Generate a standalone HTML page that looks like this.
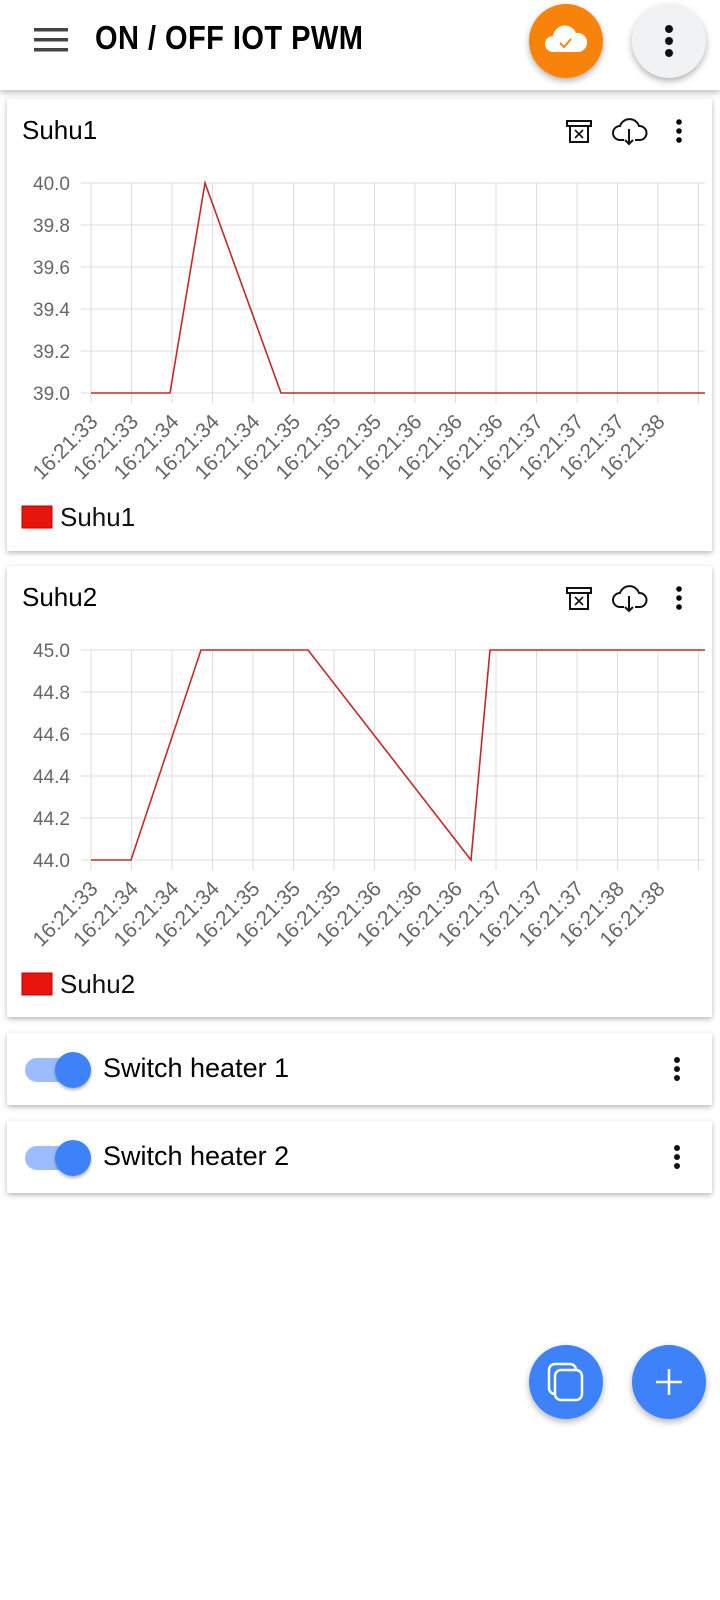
<!DOCTYPE html>
<html><head><meta charset="utf-8"><style>
*{margin:0;padding:0;box-sizing:border-box}
body{width:720px;height:1600px;background:#fff;font-family:"Liberation Sans",sans-serif;position:relative;overflow:hidden}
.hdr{position:absolute;left:0;top:0;width:720px;height:90px;background:#fff;box-shadow:0 3px 6px rgba(0,0,0,.25);z-index:2}
.title{position:absolute;left:95px;top:19px;font-size:33px;font-weight:bold;letter-spacing:.5px;transform:scaleX(.88);transform-origin:left}
.circ{position:absolute;width:74px;height:74px;border-radius:50%;box-shadow:0 3px 7px rgba(0,0,0,.3)}
.card{position:absolute;left:7px;width:705px;background:#fff;box-shadow:0 2px 5px rgba(0,0,0,.28)}
.ct{position:absolute;left:15px;top:16px;font-size:26px}
.sw{position:absolute;left:7px;width:705px;height:72px;background:#fff;box-shadow:0 2px 5px rgba(0,0,0,.28)}
.track{position:absolute;left:18px;top:25px;width:50px;height:24px;border-radius:12px;background:#9dbcff}
.knob{position:absolute;left:48px;top:19px;width:36px;height:36px;border-radius:50%;background:#3d82f8;box-shadow:0 2px 3px rgba(0,0,0,.3)}
.swt{position:absolute;left:96px;top:20px;font-size:27px}
</style></head><body>
<div class="hdr">
<svg style="position:absolute;left:34px;top:28px" width="34" height="24"><rect y="0" width="34" height="3.5" fill="#444"/><rect y="10" width="34" height="3.5" fill="#444"/><rect y="20" width="34" height="3.5" fill="#444"/></svg>
<div class="title">ON / OFF IOT PWM</div>
<div class="circ" style="left:529px;top:4px;background:#f7830a"><svg width="74" height="74" viewBox="0 0 74 74"><path d="M24 48 a8 8 0 0 1 0-16 a12 12 0 0 1 23-3 a9.5 9.5 0 0 1 3 19z" fill="#fff"/><path d="M31 39 l4 4 l7-8" stroke="#f7830a" stroke-width="2" fill="none"/></svg></div>
<div class="circ" style="left:632px;top:4px;background:#f1f2f4"><svg width="74" height="74"><circle cx="37" cy="25" r="4" fill="#111"/><circle cx="37" cy="37" r="4" fill="#111"/><circle cx="37" cy="49" r="4" fill="#111"/></svg></div>
</div>
<div class="card" style="top:99px;height:452px"><div class="ct">Suhu1</div><svg id="c1" width="705" height="452" style="position:absolute;left:0;top:0"></svg></div>
<div class="card" style="top:566px;height:451px"><div class="ct">Suhu2</div><svg id="c2" width="705" height="451" style="position:absolute;left:0;top:0"></svg></div>
<div class="sw" style="top:1033px"><div class="track"></div><div class="knob"></div><div class="swt">Switch heater 1</div><svg style="position:absolute;left:660px;top:22px" width="20" height="30"><circle cx="10" cy="5" r="3" fill="#111"/><circle cx="10" cy="14" r="3" fill="#111"/><circle cx="10" cy="23" r="3" fill="#111"/></svg></div>
<div class="sw" style="top:1121px"><div class="track"></div><div class="knob"></div><div class="swt">Switch heater 2</div><svg style="position:absolute;left:660px;top:22px" width="20" height="30"><circle cx="10" cy="5" r="3" fill="#111"/><circle cx="10" cy="14" r="3" fill="#111"/><circle cx="10" cy="23" r="3" fill="#111"/></svg></div>
<div class="circ" style="left:529px;top:1345px;background:#3d82f8"><svg width="74" height="74"><rect x="20" y="19" width="27" height="30" rx="6" fill="none" stroke="#fff" stroke-width="2.5"/><rect x="26" y="25" width="27" height="30" rx="6" fill="#3d82f8" stroke="#fff" stroke-width="2.5"/></svg></div>
<div class="circ" style="left:632px;top:1345px;background:#3d82f8"><svg width="74" height="74"><path d="M37 24v26M24 37h26" stroke="#fff" stroke-width="2.5"/></svg></div>
<script>
function chart(id,top,bot,labs,ticks,pts,name){
 var s='',x0=84,dx=40.5,N=16;
 s+='<g stroke="#111" stroke-width="2" fill="none"><rect x="560" y="22" width="24" height="5"/><path d="M563 27v16h18v-16"/><path d="M568 31l8 8M576 31l-8 8" stroke-width="1.6"/>';
 s+='<path d="M617 41h-4a7 7 0 0 1 0-14a10 10 0 0 1 19 0a7 7 0 0 1 1 14h-5"/><path d="M622 30v15M618 41l4 4l4-4"/></g>';
 s+='<circle cx="672" cy="23" r="2.8"/><circle cx="672" cy="32" r="2.8"/><circle cx="672" cy="41" r="2.8"/>';
 var step=(bot-top)/5;
 for(var i=0;i<6;i++){var y=top+i*step;s+='<line x1="74" x2="698" y1="'+y+'" y2="'+y+'" stroke="#ddd"/>';
  s+='<text x="63" y="'+(y+7)+'" text-anchor="end" font-size="19" fill="#666">'+labs[i]+'</text>';}
 for(var j=0;j<N;j++){var x=x0+j*dx;s+='<line x1="'+x+'" x2="'+x+'" y1="'+top+'" y2="'+(bot+10)+'" stroke="#ddd"/>';}
 for(var j=0;j<15;j++){var x=x0+j*dx+8;s+='<text transform="translate('+x+','+(bot+30)+') rotate(-45)" text-anchor="end" font-size="21" fill="#666">'+ticks[j]+'</text>';}
 var p=pts.map(function(q){return q[0]+','+(top+(1-q[1])*(bot-top))}).join(' ');
 s+='<polyline points="'+p+'" fill="none" stroke="#c62828" stroke-width="1.6"/>';
 s+='<rect x="15" y="'+(bot+113)+'" width="30" height="22" fill="#e8150f" stroke="#b00" />';
 s+='<text x="53" y="'+(bot+133)+'" font-size="26" fill="#111">'+name+'</text>';
 document.getElementById(id).innerHTML=s;
}
chart('c1',84,294,['40.0','39.8','39.6','39.4','39.2','39.0'],
 ['16:21:33','16:21:33','16:21:34','16:21:34','16:21:34','16:21:35','16:21:35','16:21:35','16:21:36','16:21:36','16:21:36','16:21:37','16:21:37','16:21:37','16:21:38'],
 [[84,0],[163,0],[198,1],[274,0],[698,0]],'Suhu1');
chart('c2',84,294,['45.0','44.8','44.6','44.4','44.2','44.0'],
 ['16:21:33','16:21:34','16:21:34','16:21:34','16:21:35','16:21:35','16:21:35','16:21:36','16:21:36','16:21:36','16:21:37','16:21:37','16:21:37','16:21:38','16:21:38'],
 [[84,0],[124,0],[194,1],[301,1],[464,0],[483,1],[698,1]],'Suhu2');
</script>
</body></html>
